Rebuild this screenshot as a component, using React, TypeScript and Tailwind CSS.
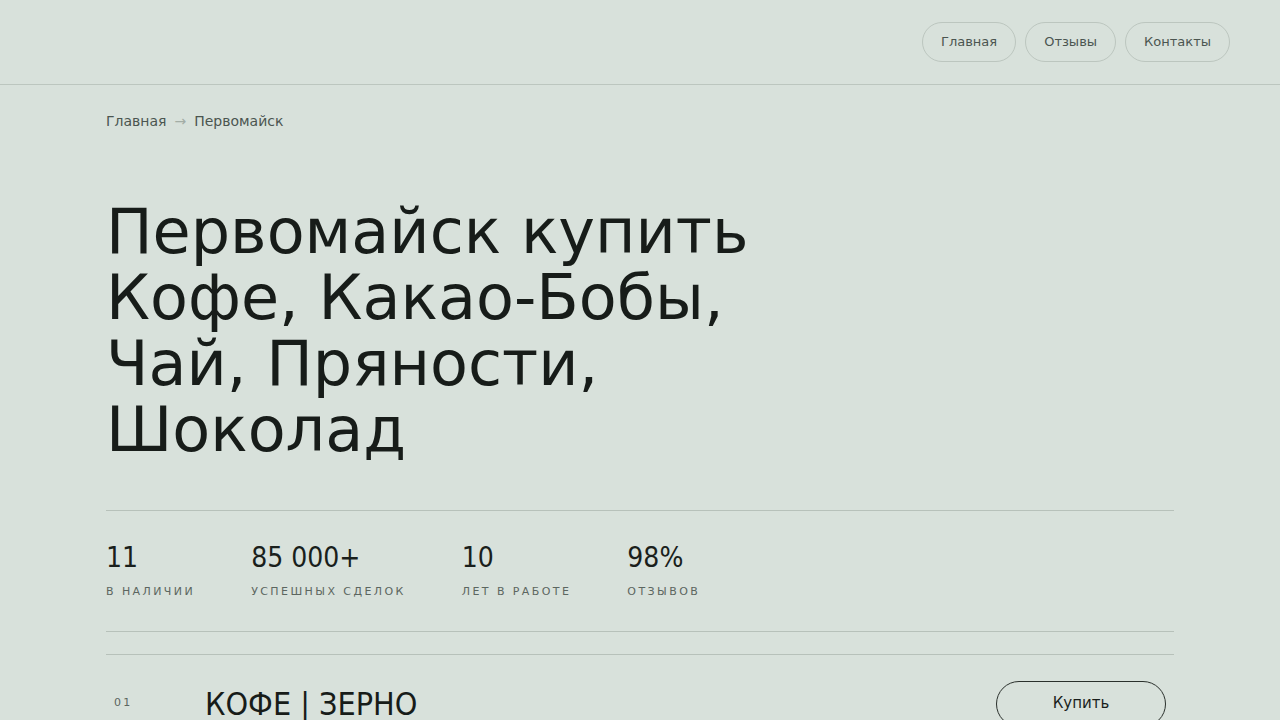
import React from "react";

const font = { fontFamily: '"DejaVu Sans", "Noto Sans", sans-serif' };
const condensed = { fontFamily: '"DejaVu Sans Condensed", "DejaVu Sans", sans-serif' };

function NavPill({ label }: { label: string }) {
  return (
    <a className="flex h-[40px] items-center rounded-full border border-[#bcc6bf] px-[18px] text-[13px] text-[#4b5550]">
      {label}
    </a>
  );
}

function Stat({ value, label }: { value: string; label: string }) {
  return (
    <div className="flex flex-col">
      <div className="text-[28px] leading-[32px] text-[#1a1f1c]" style={condensed}>{value}</div>
      <div className="mt-[10px] text-[11px] uppercase tracking-[0.22em] text-[#5c6660]">{label}</div>
    </div>
  );
}

export default function App() {
  return (
    <div className="min-h-[720px] w-full bg-[#d8e1db] text-[#1a1f1c]" style={font}>
      <header className="flex h-[85px] items-center justify-end gap-[9px] border-b border-[#bcc6bf] pr-[50px]">
        <NavPill label="Главная" />
        <NavPill label="Отзывы" />
        <NavPill label="Контакты" />
      </header>

      <main className="mx-[106px]">
        <nav className="mt-[26px] flex items-center gap-[8px] text-[14px] text-[#4b5550]">
          <span>Главная</span>
          <span className="text-[#a3ada6]">→</span>
          <span>Первомайск</span>
        </nav>

        <h1 className="mt-[67px] max-w-[680px] text-[62px] font-normal leading-[66px] text-[#171c19]">
          Первомайск купить Кофе, Какао-Бобы, Чай, Пряности, Шоколад
        </h1>

        <div className="mt-[47px] border-t border-[#b7c1ba]" />

        <div className="flex gap-[56px] pt-[31px] pb-[30px]">
          <Stat value="11" label="в наличии" />
          <Stat value="85 000+" label="успешных сделок" />
          <Stat value="10" label="лет в работе" />
          <Stat value="98%" label="отзывов" />
        </div>

        <div className="border-t border-[#b7c1ba]" />
        <div className="mt-[22px] border-t border-[#b7c1ba]" />

        <div className="flex items-center pt-[26px]">
          <div className="w-[99px] pl-[8px] text-[11px] tracking-[0.2em] text-[#5c6660]">01</div>
          <div className="flex-1 text-[32px] leading-[40px] text-[#171c19]" style={condensed}>
            КОФЕ | ЗЕРНО
          </div>
          <button className="mr-[8px] flex h-[46px] w-[170px] items-center justify-center rounded-full border border-[#2a302c] text-[15px] text-[#1a1f1c]">
            Купить
          </button>
        </div>
      </main>
    </div>
  );
}
